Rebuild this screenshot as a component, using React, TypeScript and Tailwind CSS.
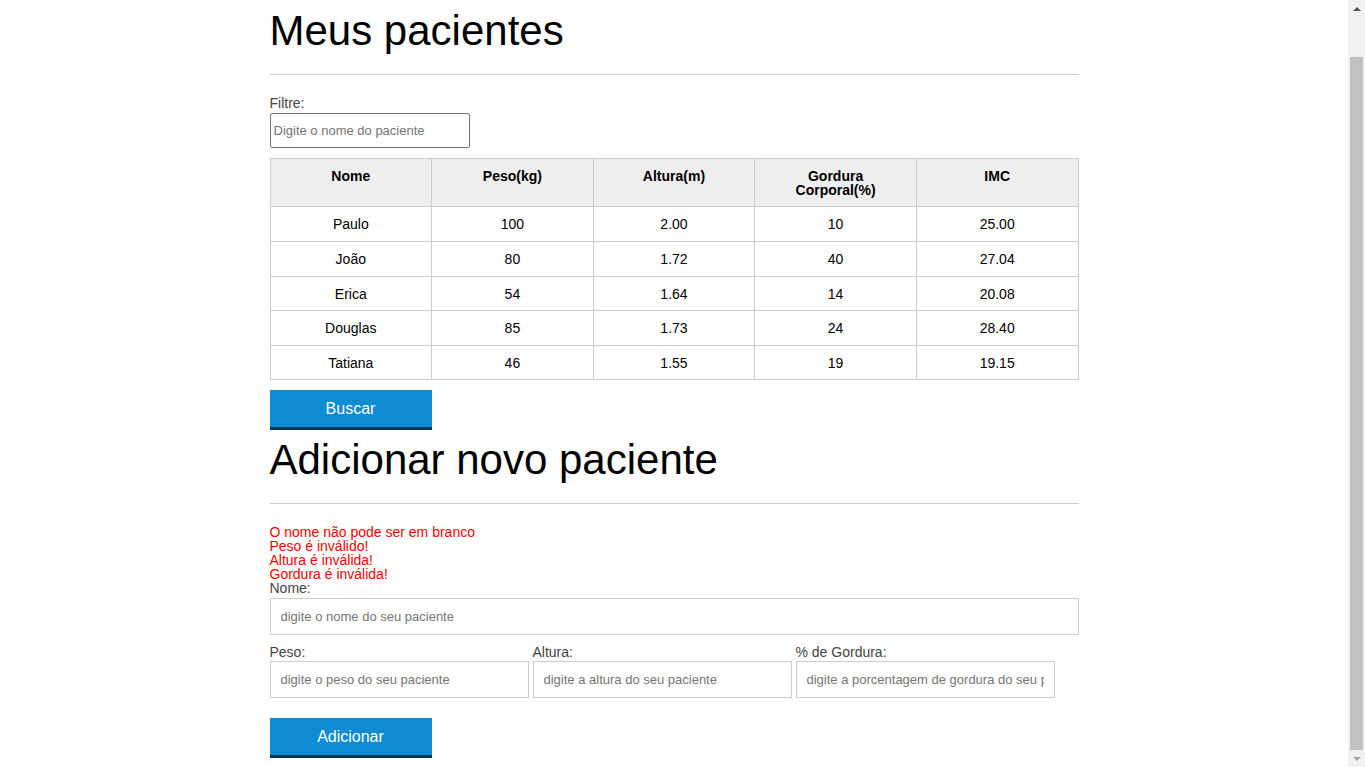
import React from 'react';

const pacientes = [
  { nome: 'Paulo', peso: '100', altura: '2.00', gordura: '10', imc: '25.00', h: 'h-[35px]' },
  { nome: 'João', peso: '80', altura: '1.72', gordura: '40', imc: '27.04', h: 'h-[35px]' },
  { nome: 'Erica', peso: '54', altura: '1.64', gordura: '14', imc: '20.08', h: 'h-[34px]' },
  { nome: 'Douglas', peso: '85', altura: '1.73', gordura: '24', imc: '28.40', h: 'h-[35px]' },
  { nome: 'Tatiana', peso: '46', altura: '1.55', gordura: '19', imc: '19.15', h: 'h-[34px]' },
];

const erros = [
  'O nome não pode ser em branco',
  'Peso é inválido!',
  'Altura é inválida!',
  'Gordura é inválida!',
];

function Botao({ children }: { children: React.ReactNode }) {
  return (
    <button className="block w-[162px] h-[40px] bg-[#0d8bd3] border-b-[3px] border-[#08344d] text-white text-[16px] leading-[37px] text-center">
      {children}
    </button>
  );
}

function Titulo({ children }: { children: React.ReactNode }) {
  return (
    <>
      <h1 className="text-[42px] leading-[48px] text-black font-normal">{children}</h1>
      <hr className="mt-[19px] border-0 border-t border-[#cccccc]" />
    </>
  );
}

function Scrollbar() {
  return (
    <div className="w-[17px] h-full bg-[#f1f1f1] flex flex-col items-center">
      <div className="h-[17px] flex items-center justify-center">
        <div className="w-0 h-0 border-l-[4px] border-r-[4px] border-b-[4px] border-l-transparent border-r-transparent border-b-[#505050]" />
      </div>
      <div className="flex-1 w-full px-[2px] pt-[40px]">
        <div className="w-full h-full bg-[#c1c1c1]" />
      </div>
      <div className="h-[17px] flex items-center justify-center">
        <div className="w-0 h-0 border-l-[4px] border-r-[4px] border-t-[4px] border-l-transparent border-r-transparent border-t-[#a3a3a3]" />
      </div>
    </div>
  );
}

export default function App() {
  return (
    <div className="flex h-[767px] overflow-hidden bg-white font-['Liberation_Sans',Arial,sans-serif]">
      <div className="flex-1">
        <div className="w-[809px] mx-auto pt-[7px]">
          {/* Lista */}
          <Titulo>Meus pacientes</Titulo>

          <label className="block mt-[21px] text-[14px] leading-[14px] text-[#444]">Filtre:</label>
          <input
            className="mt-[3px] block w-[200px] h-[35px] border border-[#767676] rounded-[2px] px-[3px] text-[13px] placeholder:text-[#757575] outline-none"
            placeholder="Digite o nome do paciente"
          />

          <table className="mt-[10px] w-[809px] border-collapse table-fixed text-[14px] leading-[14px] text-black">
            <thead>
              <tr className="bg-[#eeeeee]">
                <th className="border border-[#cccccc] px-4 pt-[10px] pb-[9px] h-[47px] align-top font-bold">Nome</th>
                <th className="border border-[#cccccc] px-4 pt-[10px] pb-[9px] align-top font-bold">Peso(kg)</th>
                <th className="border border-[#cccccc] px-4 pt-[10px] pb-[9px] align-top font-bold">Altura(m)</th>
                <th className="border border-[#cccccc] px-4 pt-[10px] pb-[9px] align-top font-bold">Gordura Corporal(%)</th>
                <th className="border border-[#cccccc] px-4 pt-[10px] pb-[9px] align-top font-bold">IMC</th>
              </tr>
            </thead>
            <tbody>
              {pacientes.map(p => (
                <tr key={p.nome} className={p.h}>
                  <td className="border border-[#cccccc] py-0 text-center">{p.nome}</td>
                  <td className="border border-[#cccccc] py-0 text-center">{p.peso}</td>
                  <td className="border border-[#cccccc] py-0 text-center">{p.altura}</td>
                  <td className="border border-[#cccccc] py-0 text-center">{p.gordura}</td>
                  <td className="border border-[#cccccc] py-0 text-center">{p.imc}</td>
                </tr>
              ))}
            </tbody>
          </table>

          <div className="mt-[10px]">
            <Botao>Buscar</Botao>
          </div>

          {/* Formulário */}
          <div className="mt-[6px]">
            <Titulo>Adicionar novo paciente</Titulo>
          </div>

          <ul className="mt-[21px] text-[14px] leading-[14px] text-[#ff0000]">
            {erros.map(e => (
              <li key={e}>{e}</li>
            ))}
          </ul>

          <label className="block text-[14px] leading-[14px] text-[#444]">Nome:</label>
          <input
            className="mt-[3px] block w-full h-[37px] border border-[#cccccc] pl-[10px] text-[13px] placeholder:text-[#757575] outline-none"
            placeholder="digite o nome do seu paciente"
          />

          <div className="mt-[10px] flex gap-[4px]">
            {[
              ['Peso:', 'digite o peso do seu paciente'],
              ['Altura:', 'digite a altura do seu paciente'],
              ['% de Gordura:', 'digite a porcentagem de gordura do seu paciente'],
            ].map(([label, ph]) => (
              <div key={label} className="w-[259px]">
                <label className="block text-[14px] leading-[14px] text-[#444]">{label}</label>
                <input
                  className="mt-[2px] block w-full h-[37px] border border-[#cccccc] px-[10px] text-[13px] placeholder:text-[#757575] outline-none"
                  placeholder={ph}
                />
              </div>
            ))}
          </div>

          <div className="mt-[20px]">
            <Botao>Adicionar</Botao>
          </div>
        </div>
      </div>
      <Scrollbar />
    </div>
  );
}
